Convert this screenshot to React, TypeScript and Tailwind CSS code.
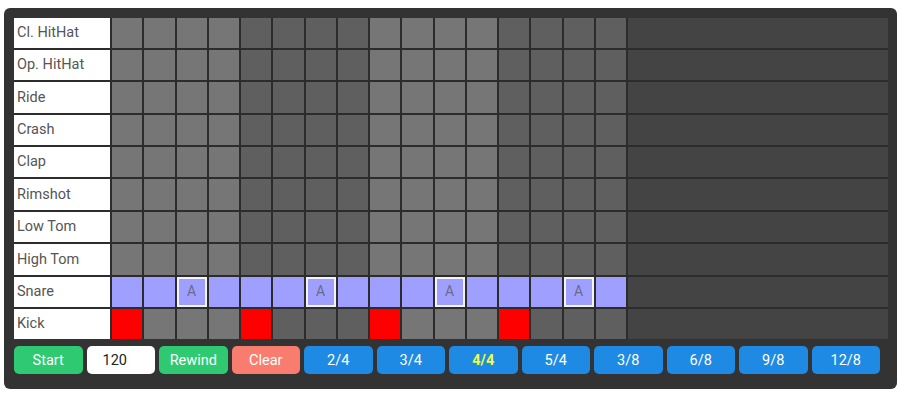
import React from "react";

const instruments = [
  "Cl. HitHat",
  "Op. HitHat",
  "Ride",
  "Crash",
  "Clap",
  "Rimshot",
  "Low Tom",
  "High Tom",
  "Snare",
  "Kick",
];

const signatures = ["2/4", "3/4", "4/4", "5/4", "3/8", "6/8", "9/8", "12/8"];

function Cell({ row, step }: { row: string; step: number }) {
  const lightGroup = Math.floor(step / 4) % 2 === 0;
  if (row === "Snare") {
    const accent = step % 4 === 2;
    return (
      <div className="bg-[#9f9fff] flex items-center justify-center">
        {accent && (
          <div className="w-full h-full border-2 border-[#f4f4f4] flex items-center justify-center text-[14px] text-[#6a6a8a]">
            A
          </div>
        )}
      </div>
    );
  }
  if (row === "Kick" && step % 4 === 0) {
    return <div className="bg-[#ff0000]" />;
  }
  return <div className={lightGroup ? "bg-[#767676]" : "bg-[#5f5f5f]"} />;
}

export default function App() {
  const [tempo, setTempo] = React.useState("120");
  const steps = Array.from({ length: 16 }, (_, i) => i);

  return (
    <div className="pt-[8px] pl-[4px] font-['Roboto',sans-serif]">
      <div className="w-[893px] bg-[#333333] rounded-[6px] pt-[9.5px] pl-[10px] pr-[9px] pb-[15px]">
        <div className="grid grid-cols-[96px_repeat(16,30.25px)_1fr] auto-rows-[30.4px] gap-[2px] bg-[#2c2c2c]">
          {instruments.map((name) => (
            <React.Fragment key={name}>
              <div className="bg-white text-[#555555] text-[14.5px] flex items-center pl-[3px]">
                {name}
              </div>
              {steps.map((s) => (
                <Cell key={s} row={name} step={s} />
              ))}
              <div className="bg-[#444444]" />
            </React.Fragment>
          ))}
        </div>
        <div className="flex gap-[4px] mt-[7px] text-[14.5px]">
          <button className="w-[68.5px] h-[28px] rounded-[5px] bg-[#2ec971] text-white">
            Start
          </button>
          <input
            value={tempo}
            onChange={(e) => setTempo(e.target.value)}
            className="w-[68.5px] h-[28px] rounded-[5px] bg-white text-[#222222] pl-[16px] outline-none"
          />
          <button className="w-[68.5px] h-[28px] rounded-[5px] bg-[#2ec971] text-white">
            Rewind
          </button>
          <button className="w-[68.5px] h-[28px] rounded-[5px] bg-[#f87d6e] text-white">
            Clear
          </button>
          {signatures.map((sig) => (
            <button
              key={sig}
              className={
                sig === "4/4"
                  ? "w-[68.5px] h-[28px] rounded-[5px] bg-[#1e8ae3] text-[#eeff44] font-bold"
                  : "w-[68.5px] h-[28px] rounded-[5px] bg-[#1e8ae3] text-white"
              }
            >
              {sig}
            </button>
          ))}
        </div>
      </div>
    </div>
  );
}
